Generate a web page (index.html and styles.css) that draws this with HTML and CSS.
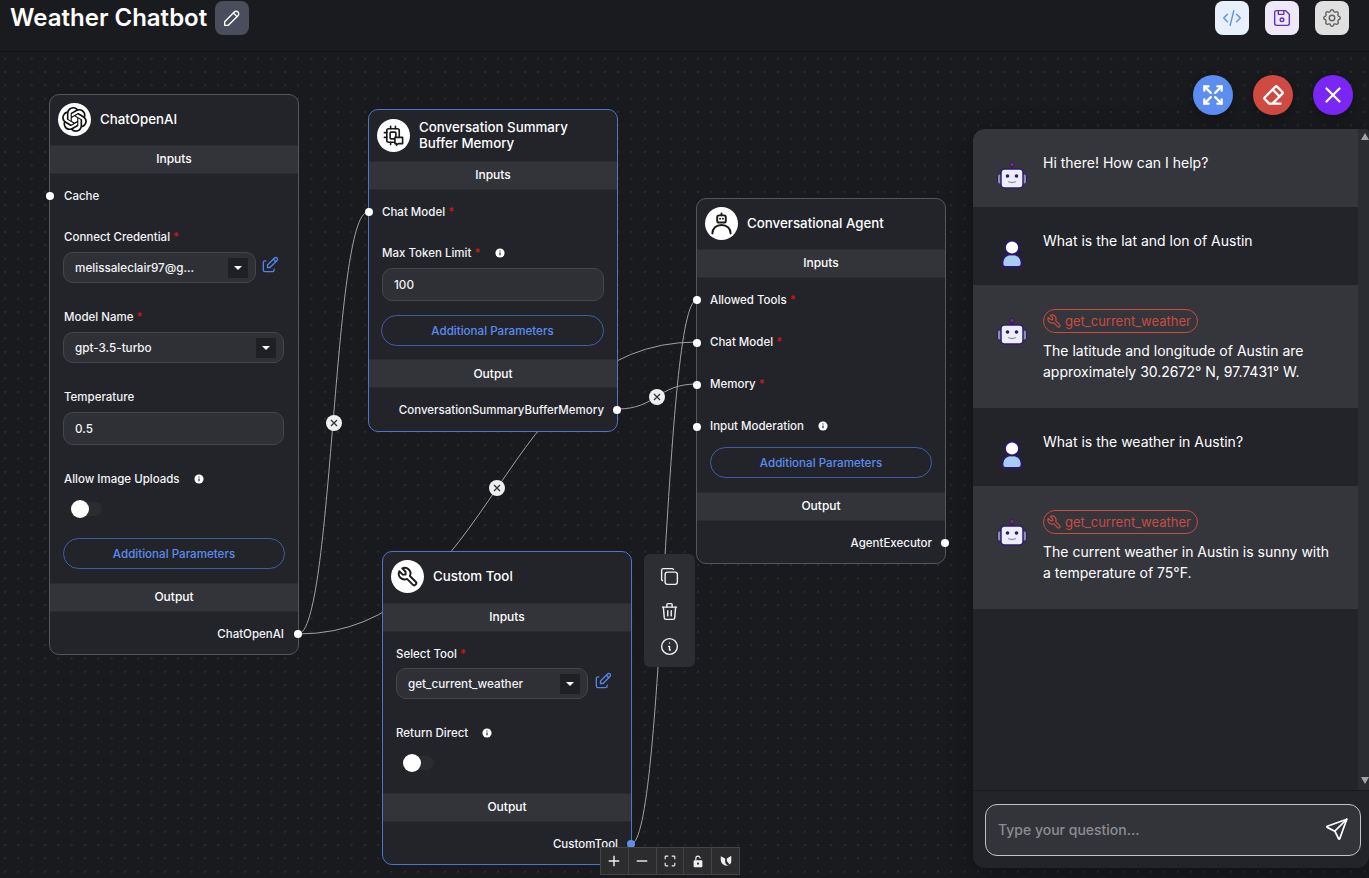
FILE: index.html
```html
<!DOCTYPE html>
<html lang="en">
<head>
<meta charset="utf-8">
<title>Weather Chatbot</title>
<link rel="stylesheet" href="styles.css">
</head>
<body>
<div class="app">
  <header class="topbar">
    <div class="title-group">
      <h1 class="title">Weather Chatbot</h1>
      <button class="square-btn btn-edit"><svg class="ico" viewBox="0 0 24 24"><path d="M4 20h4l10.5 -10.5a2.828 2.828 0 1 0 -4 -4l-10.5 10.5v4"/><path d="M13.5 6.5l4 4"/></svg></button>
    </div>
    <div class="top-actions">
      <button class="square-btn btn-code"><svg class="ico" viewBox="0 0 24 24"><path d="M7 8l-4 4l4 4"/><path d="M17 8l4 4l-4 4"/><path d="M14 4l-4 16"/></svg></button>
      <button class="square-btn btn-save"><svg class="ico" viewBox="0 0 24 24"><path d="M6 4h10l4 4v10a2 2 0 0 1 -2 2h-12a2 2 0 0 1 -2 -2v-12a2 2 0 0 1 2 -2"/><circle cx="12" cy="14" r="2"/><path d="M14 4v4h-6v-4"/></svg></button>
      <button class="square-btn btn-gear"><svg class="ico" viewBox="0 0 24 24"><path d="M10.325 4.317c.426 -1.756 2.924 -1.756 3.35 0a1.724 1.724 0 0 0 2.573 1.066c1.543 -.94 3.31 .826 2.37 2.37a1.724 1.724 0 0 0 1.065 2.572c1.756 .426 1.756 2.924 0 3.35a1.724 1.724 0 0 0 -1.066 2.573c.94 1.543 -.826 3.31 -2.37 2.37a1.724 1.724 0 0 0 -2.572 1.065c-.426 1.756 -2.924 1.756 -3.35 0a1.724 1.724 0 0 0 -2.573 -1.066c-1.543 .94 -3.31 -.826 -2.37 -2.37a1.724 1.724 0 0 0 -1.065 -2.572c-1.756 -.426 -1.756 -2.924 0 -3.35a1.724 1.724 0 0 0 1.066 -2.573c-.94 -1.543 .826 -3.31 2.37 -2.37c1 .608 2.296 .07 2.572 -1.065"/><circle cx="12" cy="12" r="3"/></svg></button>
    </div>
  </header>

  <main class="canvas">
    <svg class="edges" viewBox="0 52 1369 826">
      <path d="M298 634C333 634 333 212 368 212"/>
      <path d="M298 634C497 634 497 342 697 342"/>
      <path d="M617 409C657 409 657 384 697 384"/>
      <path d="M631 844C664 844 664 300 697 300"/>
      <g class="edge-x"><circle cx="334" cy="423" r="8"/><path d="M331 420l6 6M337 420l-6 6"/></g>
      <g class="edge-x"><circle cx="497" cy="488" r="8"/><path d="M494 485l6 6M500 485l-6 6"/></g>
      <g class="edge-x"><circle cx="657" cy="397" r="8"/><path d="M654 394l6 6M660 394l-6 6"/></g>
    </svg>

    <section class="node node-llm">
      <div class="node-head">
        <span class="node-icon"><svg class="logo-fill" viewBox="0 0 24 24"><path d="M22.2819 9.8211a5.9847 5.9847 0 0 0-.5157-4.9108 6.0462 6.0462 0 0 0-6.5098-2.9A6.0651 6.0651 0 0 0 4.9807 4.1818a5.9847 5.9847 0 0 0-3.9977 2.9 6.0462 6.0462 0 0 0 .7427 7.0966 5.98 5.98 0 0 0 .511 4.9107 6.051 6.051 0 0 0 6.5146 2.9001A5.9847 5.9847 0 0 0 13.2599 24a6.0557 6.0557 0 0 0 5.7718-4.2058 5.9894 5.9894 0 0 0 3.9977-2.9001 6.0557 6.0557 0 0 0-.7475-7.0729zm-9.022 12.6081a4.4755 4.4755 0 0 1-2.8764-1.0408l.1419-.0804 4.7783-2.7582a.7948.7948 0 0 0 .3927-.6813v-6.7369l2.02 1.1686a.071.071 0 0 1 .038.052v5.5826a4.504 4.504 0 0 1-4.4945 4.4944zm-9.6607-4.1254a4.4708 4.4708 0 0 1-.5346-3.0137l.142.0852 4.783 2.7582a.7712.7712 0 0 0 .7806 0l5.8428-3.3685v2.3324a.0804.0804 0 0 1-.0332.0615L9.74 19.9502a4.4992 4.4992 0 0 1-6.1408-1.6464zM2.3408 7.8956a4.485 4.485 0 0 1 2.3655-1.9728V11.6a.7664.7664 0 0 0 .3879.6765l5.8144 3.3543-2.0201 1.1685a.0757.0757 0 0 1-.071 0l-4.8303-2.7865A4.504 4.504 0 0 1 2.3408 7.872zm16.5963 3.8558L13.1038 8.364 15.1192 7.2a.0757.0757 0 0 1 .071 0l4.8303 2.7913a4.4944 4.4944 0 0 1-.6765 8.1042v-5.6772a.79.79 0 0 0-.407-.667zm2.0107-3.0231l-.142-.0852-4.7735-2.7818a.7759.7759 0 0 0-.7854 0L9.409 9.2297V6.8974a.0662.0662 0 0 1 .0284-.0615l4.8303-2.7866a4.4992 4.4992 0 0 1 6.6802 4.66zM8.3065 12.863l-2.02-1.1638a.0804.0804 0 0 1-.038-.0567V6.0742a4.4992 4.4992 0 0 1 7.3757-3.4537l-.142.0805L8.704 5.459a.7948.7948 0 0 0-.3927.6813zm1.0976-2.3654l2.602-1.4998 2.6069 1.4998v2.9994l-2.5974 1.4997-2.6067-1.4997Z"/></svg></span>
        <span class="node-title">ChatOpenAI</span>
      </div>
      <div class="bar">Inputs</div>
      <div class="row"><span class="handle handle-left"></span><span class="label">Cache</span></div>
      <div class="field">
        <div class="label">Connect Credential <span class="req">*</span></div>
        <div class="select-line">
          <div class="select select-short"><span>melissaleclair97@g...</span><span class="caret"></span></div>
          <svg class="ico edit-ico" viewBox="0 0 24 24"><path d="M7 7h-1a2 2 0 0 0 -2 2v9a2 2 0 0 0 2 2h9a2 2 0 0 0 2 -2v-1"/><path d="M20.385 6.585a2.1 2.1 0 0 0 -2.97 -2.97l-8.415 8.385v3h3l8.385 -8.415z"/><path d="M16 5l3 3"/></svg>
        </div>
      </div>
      <div class="field">
        <div class="label">Model Name <span class="req">*</span></div>
        <div class="select"><span>gpt-3.5-turbo</span><span class="caret"></span></div>
      </div>
      <div class="field">
        <div class="label">Temperature</div>
        <div class="input">0.5</div>
      </div>
      <div class="field field-toggle">
        <div class="label">Allow Image Uploads <svg class="info-dot" viewBox="0 0 12 12"><circle cx="6" cy="6" r="5.5"/><path d="M6 3v1.2M6 5.4v3.4"/></svg></div>
        <span class="toggle"></span>
      </div>
      <div class="btn-wrap"><div class="outline-btn">Additional Parameters</div></div>
      <div class="bar">Output</div>
      <div class="row row-out"><span class="label">ChatOpenAI</span><span class="handle handle-right"></span></div>
    </section>

    <section class="node node-memory selected">
      <div class="node-head">
        <span class="node-icon"><svg class="ico-dark" viewBox="0 0 24 24"><rect x="5" y="5" width="13" height="14" rx="2"/><rect x="8.500" y="8.500" width="6" height="7" rx="1"/><path d="M2.500 9H5M2.500 14H5M9 2.500V5M14 2.500V5M9 19v2.500"/><path class="bubble" d="M13.500 14h8v6.500h-4.500l-2 1.500v-1.500h-1.500z"/></svg></span>
        <span class="node-title">Conversation Summary Buffer Memory</span>
      </div>
      <div class="bar">Inputs</div>
      <div class="row"><span class="handle handle-left"></span><span class="label">Chat Model <span class="req">*</span></span></div>
      <div class="field">
        <div class="label">Max Token Limit <span class="req">*</span> <svg class="info-dot" viewBox="0 0 12 12"><circle cx="6" cy="6" r="5.5"/><path d="M6 3v1.2M6 5.4v3.4"/></svg></div>
        <div class="input">100</div>
      </div>
      <div class="btn-wrap"><div class="outline-btn">Additional Parameters</div></div>
      <div class="bar">Output</div>
      <div class="row row-out"><span class="label">ConversationSummaryBufferMemory</span><span class="handle handle-right"></span></div>
    </section>

    <section class="node node-agent">
      <div class="node-head">
        <span class="node-icon"><svg class="ico-dark ico-agent" viewBox="0 0 24 24"><rect x="7.500" y="3.500" width="9" height="7.500" rx="2"/><path d="M12 3.500V1.500M10.500 7h.01M13.500 7h.01M2.500 22.500c0-5.500 4-9 9.500-9s9.500 3.500 9.500 9"/></svg></span>
        <span class="node-title">Conversational Agent</span>
      </div>
      <div class="bar">Inputs</div>
      <div class="row"><span class="handle handle-left"></span><span class="label">Allowed Tools <span class="req">*</span></span></div>
      <div class="row"><span class="handle handle-left"></span><span class="label">Chat Model <span class="req">*</span></span></div>
      <div class="row"><span class="handle handle-left"></span><span class="label">Memory <span class="req">*</span></span></div>
      <div class="row"><span class="handle handle-left"></span><span class="label">Input Moderation <svg class="info-dot" viewBox="0 0 12 12"><circle cx="6" cy="6" r="5.5"/><path d="M6 3v1.2M6 5.4v3.4"/></svg></span></div>
      <div class="btn-wrap"><div class="outline-btn">Additional Parameters</div></div>
      <div class="bar">Output</div>
      <div class="row row-out"><span class="label">AgentExecutor</span><span class="handle handle-right"></span></div>
    </section>

    <section class="node node-tool selected">
      <div class="node-head">
        <span class="node-icon"><svg class="ico-dark ico-heavy" viewBox="0 0 24 24"><path d="M7 10h3v-3l-3.500 -3.500a6 6 0 0 1 8 8l6 6a2 2 0 0 1 -3 3l-6 -6a6 6 0 0 1 -8 -8l3.500 3.500"/></svg></span>
        <span class="node-title">Custom Tool</span>
      </div>
      <div class="bar">Inputs</div>
      <div class="field field-tool">
        <div class="label">Select Tool <span class="req">*</span></div>
        <div class="select-line">
          <div class="select select-short"><span>get_current_weather</span><span class="caret"></span></div>
          <svg class="ico edit-ico" viewBox="0 0 24 24"><path d="M7 7h-1a2 2 0 0 0 -2 2v9a2 2 0 0 0 2 2h9a2 2 0 0 0 2 -2v-1"/><path d="M20.385 6.585a2.1 2.1 0 0 0 -2.97 -2.97l-8.415 8.385v3h3l8.385 -8.415z"/><path d="M16 5l3 3"/></svg>
        </div>
      </div>
      <div class="field field-toggle">
        <div class="label">Return Direct <svg class="info-dot" viewBox="0 0 12 12"><circle cx="6" cy="6" r="5.500"/><path d="M6 3v1.200M6 5.400v3.400"/></svg></div>
        <span class="toggle"></span>
      </div>
      <div class="bar">Output</div>
      <div class="row row-out"><span class="label">CustomTool</span><span class="handle handle-right handle-blue"></span></div>
    </section>

    <aside class="node-toolbar">
      <svg class="ico" viewBox="0 0 24 24"><path d="M7 9.667a2.667 2.667 0 0 1 2.667 -2.667h8.666a2.667 2.667 0 0 1 2.667 2.667v8.666a2.667 2.667 0 0 1 -2.667 2.667h-8.666a2.667 2.667 0 0 1 -2.667 -2.667z"/><path d="M4.012 16.737a2.005 2.005 0 0 1 -1.012 -1.737v-10c0 -1.100 .9 -2 2 -2h10c.75 0 1.158 .385 1.500 1"/></svg>
      <svg class="ico" viewBox="0 0 24 24"><path d="M4 7h16"/><path d="M10 11v6"/><path d="M14 11v6"/><path d="M5 7l1 12a2 2 0 0 0 2 2h8a2 2 0 0 0 2 -2l1 -12"/><path d="M9 7v-3a1 1 0 0 1 1 -1h4a1 1 0 0 1 1 1v3"/></svg>
      <svg class="ico" viewBox="0 0 24 24"><circle cx="12" cy="12" r="9"/><path d="M12 8h.01"/><path d="M11 12h1v4h1"/></svg>
    </aside>

    <nav class="flow-controls">
      <span class="ctl"><svg class="ctl-ico" viewBox="0 0 16 16"><path d="M8 2v12M2 8h12"/></svg></span>
      <span class="ctl"><svg class="ctl-ico" viewBox="0 0 16 16"><path d="M2 8h12"/></svg></span>
      <span class="ctl"><svg class="ctl-ico ctl-thin" viewBox="0 0 16 16"><path d="M2.500 6V3.500a1 1 0 0 1 1-1H6M10 2.500h2.500a1 1 0 0 1 1 1V6M13.500 10v2.500a1 1 0 0 1-1 1H10M6 13.500H3.500a1 1 0 0 1-1-1V10"/></svg></span>
      <span class="ctl"><svg class="ctl-ico ctl-thin" viewBox="0 0 16 16"><rect class="ctl-solid" x="3" y="7" width="10" height="8" rx="1"/><path d="M5.500 7V5a2.500 2.500 0 0 1 5 0"/><circle class="ctl-hole" cx="8" cy="11" r="1.200"/></svg></span>
      <span class="ctl"><svg class="ctl-ico" viewBox="0 0 16 16"><path class="ctl-solid" d="M2 2.500l5 2.500v3.500a5 5 0 0 0 5 5h-3a7 7 0 0 1-7-7z"/><path class="ctl-solid" d="M9 5l5-3v6.500a4 4 0 0 1-2 3.500L9 8z"/></svg></span>
    </nav>

    <div class="fabs">
      <button class="fab fab-blue"><svg class="ico" viewBox="0 0 24 24"><path d="M16 4h4v4"/><path d="M14 10l6 -6"/><path d="M8 20h-4v-4"/><path d="M4 20l6 -6"/><path d="M16 20h4v-4"/><path d="M14 14l6 6"/><path d="M8 4h-4v4"/><path d="M4 4l6 6"/></svg></button>
      <button class="fab fab-red"><svg class="ico" viewBox="0 0 24 24"><path d="M19 20h-10.500l-4.210 -4.300a1 1 0 0 1 0 -1.410l10 -10a1 1 0 0 1 1.410 0l5 5a1 1 0 0 1 0 1.410l-9.200 9.300"/><path d="M18 13.300l-6.300 -6.300"/></svg></button>
      <button class="fab fab-purple"><svg class="ico" viewBox="0 0 24 24"><path d="M18 6l-12 12"/><path d="M6 6l12 12"/></svg></button>
    </div>

    <aside class="chat">
      <div class="chat-scroll">
        <div class="messages">
          <div class="msg msg-bot">
            <svg class="avatar" viewBox="0 0 32 32"><use href="#bot"/></svg>
            <div class="msg-body"><p class="msg-text">Hi there! How can I help?</p></div>
          </div>
          <div class="msg">
            <svg class="avatar avatar-user" viewBox="0 0 32 32"><use href="#user"/></svg>
            <div class="msg-body"><p class="msg-text">What is the lat and lon of Austin</p></div>
          </div>
          <div class="msg msg-bot">
            <svg class="avatar avatar-low" viewBox="0 0 32 32"><use href="#bot"/></svg>
            <div class="msg-body">
              <span class="chip"><svg class="chip-ico" viewBox="0 0 24 24"><path d="M7 10h3v-3l-3.500 -3.500a6 6 0 0 1 8 8l6 6a2 2 0 0 1 -3 3l-6 -6a6 6 0 0 1 -8 -8l3.500 3.500"/></svg>get_current_weather</span>
              <p class="msg-text">The latitude and longitude of Austin are approximately 30.2672° N, 97.7431° W.</p>
            </div>
          </div>
          <div class="msg">
            <svg class="avatar avatar-user" viewBox="0 0 32 32"><use href="#user"/></svg>
            <div class="msg-body"><p class="msg-text">What is the weather in Austin?</p></div>
          </div>
          <div class="msg msg-bot">
            <svg class="avatar avatar-low" viewBox="0 0 32 32"><use href="#bot"/></svg>
            <div class="msg-body">
              <span class="chip"><svg class="chip-ico" viewBox="0 0 24 24"><path d="M7 10h3v-3l-3.500 -3.500a6 6 0 0 1 8 8l6 6a2 2 0 0 1 -3 3l-6 -6a6 6 0 0 1 -8 -8l3.500 3.500"/></svg>get_current_weather</span>
              <p class="msg-text">The current weather in Austin is sunny with a temperature of 75°F.</p>
            </div>
          </div>
        </div>
        <div class="scrollbar"><span class="arrow-up"></span><span class="arrow-down"></span></div>
      </div>
      <div class="composer">
        <div class="composer-box">
          <span class="placeholder">Type your question...</span>
          <svg class="ico send-ico" viewBox="0 0 24 24"><path d="M10 14l11 -11"/><path d="M21 3l-6.500 18a.55 .55 0 0 1 -1 0l-3.500 -7l-7 -3.500a.55 .55 0 0 1 0 -1l18 -6.500"/></svg>
        </div>
      </div>
    </aside>
  </main>
</div>

<svg class="defs" width="0" height="0">
  <defs>
    <g id="bot">
      <path d="M16 8V4.500" stroke="#2f1a66" stroke-width="1.500"/>
      <circle cx="16" cy="3.500" r="2" fill="#8a2f6a" stroke="#2f1a66"/>
      <rect x="1.500" y="13" width="5" height="10" rx="2" fill="#8d8fb0" stroke="#2f1a66"/>
      <rect x="25.500" y="13" width="5" height="10" rx="2" fill="#8d8fb0" stroke="#2f1a66"/>
      <rect x="5" y="8" width="22" height="19" rx="3.500" fill="#ecedfa" stroke="#2f1a66" stroke-width="1.500"/>
      <circle cx="11.500" cy="15" r="1.800" fill="#2f1a66"/>
      <circle cx="20.500" cy="15" r="1.800" fill="#2f1a66"/>
      <path d="M12 20.500q4 2 8 0" fill="none" stroke="#8d8fb0" stroke-width="1.300"/>
    </g>
    <g id="user">
      <path d="M6.500 26v-2a9.500 8 0 0 1 19 0v2a3 3 0 0 1-3 3h-13a3 3 0 0 1-3-3z" fill="#a7cdf2" stroke="#2c1670" stroke-width="1.800"/>
      <circle cx="16" cy="9.500" r="7" fill="#fff" stroke="#2c1670" stroke-width="1.800"/>
    </g>
  </defs>
</svg>
</body>
</html>
```

FILE: styles.css
```css
* { box-sizing: border-box; }
html, body { margin: 0; padding: 0; height: 100%; overflow: hidden; }
body { background: #191a1e; color: #fff; font-family: Inter, "Liberation Sans", sans-serif; }
button { border: 0; padding: 0; cursor: pointer; }
p, h1 { margin: 0; }
.defs { position: absolute; }

.app { display: flex; flex-direction: column; height: 878px; }

.topbar { flex: 0 0 52px; display: flex; justify-content: space-between; align-items: flex-start; padding: 1px 20px 0 10px; background: #1a1b1f; border-bottom: 1px solid #101114; }
.title-group { display: flex; align-items: center; gap: 8px; }
.title { font-size: 24px; font-weight: 600; line-height: 34px; letter-spacing: 0; }
.top-actions { display: flex; gap: 16px; }
.square-btn { width: 34px; height: 34px; border-radius: 8px; display: flex; align-items: center; justify-content: center; }
.ico { width: 20px; height: 20px; fill: none; stroke: currentColor; stroke-width: 1.6; stroke-linecap: round; stroke-linejoin: round; }
.square-btn .ico { width: 22px; height: 22px; stroke-width: 1.5; }
.btn-edit { background: #4a4e5c; color: #fff; }
.btn-code { background: #e8f0fd; color: #5c8ef0; }
.btn-save { background: #efe8f8; color: #5e35b1; }
.btn-gear { background: #e0e0e0; color: #616161; }

.canvas { position: relative; flex: 1; background-color: #191a1e; background-image: radial-gradient(circle at center, #55565b 0.5px, transparent 0.75px); background-size: 13.33px 13.33px; background-position: -1.67px 0; }
.edges { position: absolute; inset: 0; width: 1369px; height: 826px; fill: none; stroke: #a0a0a6; stroke-width: 1; }
.edge-x circle { fill: #efefef; stroke: none; }
.edge-x path { stroke: #333; stroke-width: 1.3; }

.node { --pad: 13px; position: absolute; width: 250px; display: flex; flex-direction: column; background: #23242a; border: 1px solid #55565b; border-radius: 10px; }
.node.selected { border-color: #4f74c9; }
.node-llm { --pad: 14px; left: 49px; top: 42px; }
.node-memory { left: 368px; top: 57px; }
.node-agent { left: 696px; top: 146px; }
.node-tool { left: 382px; top: 499px; }

.node-head { height: 50px; display: flex; align-items: center; gap: 9px; padding: 0 8px 1px; }
.node-memory .node-head { height: 51px; }
.node-tool .node-head { height: 51px; padding-bottom: 2px; }
.node-icon { flex: none; width: 33px; height: 33px; border-radius: 50%; background: #fff; display: flex; align-items: center; justify-content: center; }
.logo-fill { width: 25px; height: 25px; fill: #111; }
.ico-dark { width: 23px; height: 23px; fill: none; stroke: #1a1a1a; stroke-width: 1.7; stroke-linecap: round; stroke-linejoin: round; }
.ico-heavy { stroke-width: 2; }
.ico-agent { stroke-width: 2; }
.bubble { fill: #fff; }
.node-title { font-size: 13.3px; line-height: 16.5px; font-weight: 500; }

.bar { height: 29px; padding-bottom: 2px; background: #33343a; border-top: 1px solid #2b2c31; border-bottom: 1px solid #2b2c31; display: flex; align-items: center; justify-content: center; font-size: 12px; font-weight: 500; }
.node-memory .btn-wrap + .bar { padding-bottom: 0; }

.row { position: relative; height: 42px; display: flex; align-items: center; padding: 0 var(--pad); }
.bar + .row { height: 43px; padding-top: 1px; }
.bar + .row.row-out { height: 42px; justify-content: flex-end; }
.node-memory .bar + .row.row-out { height: 43px; }
.label { font-size: 11.5px; font-weight: 500; line-height: 16px; color: #f4f4f6; white-space: nowrap; }
.req { color: #d01818; }
.handle { position: absolute; width: 8px; height: 8px; border-radius: 50%; background: #fff; top: calc(50% - 3.5px); }
.handle-left { left: -4px; }
.handle-right { right: -4px; }
.handle-blue { background: #5f8fe8; }

.field { padding: 12px var(--pad) 14px; display: flex; flex-direction: column; gap: 7px; }
.field-tool { padding-top: 14px; gap: 6px; }
.select-line { display: flex; align-items: center; gap: 4px; }
.field-tool .select-line { gap: 5px; }
.select { height: 31px; padding: 0 7px 0 11px; display: flex; align-items: center; justify-content: space-between; background: #2f3036; border: 1px solid #45464c; border-radius: 10px; font-size: 11.7px; font-weight: 500; color: #f4f4f6; white-space: nowrap; }
.select-short { width: 193px; flex: none; }
.node-tool .select-short { width: 192px; }
.node-llm .select, .node-llm .input { margin-left: -1px; }
.caret { width: 20px; height: 20px; background: #1f2024; position: relative; flex: none; }
.caret::after { content: ""; position: absolute; left: 6px; top: 8px; border-left: 4px solid transparent; border-right: 4px solid transparent; border-top: 4px solid #fff; }
.edit-ico { color: #5384e8; margin-bottom: 6px; }
.input { height: 33px; padding: 0 11px; display: flex; align-items: center; background: #2f3036; border: 1px solid #45464c; border-radius: 10px; font-size: 11.7px; font-weight: 500; color: #f4f4f6; }
.info-dot { width: 10px; height: 10px; margin-left: 11px; fill: #fff; vertical-align: -1px; stroke-width: 0; }
.info-dot path { fill: none; stroke: #23242a; stroke-width: 1.4; }

.field-toggle { height: 79px; gap: 13px; }
.node-tool .field-toggle { height: 80px; }
.toggle { position: relative; width: 30px; height: 14px; margin: 2px 0 0 8px; border-radius: 7px; background: #2b2c31; display: block; flex: none; }
.toggle::before { content: ""; position: absolute; left: -1px; top: -2px; width: 18px; height: 18px; border-radius: 50%; background: #fff; }

.btn-wrap { padding: 0 13px 14px; }
.node-memory .btn-wrap { padding: 0 13px 13px 12px; }
.outline-btn { height: 31px; border: 1px solid #3f5da8; border-radius: 16px; display: flex; align-items: center; justify-content: center; font-size: 11.6px; font-weight: 500; color: #5a8cf2; }

.node-toolbar { position: absolute; left: 644px; top: 502px; width: 51px; height: 113px; background: #2d2e33; border-radius: 6px; display: flex; flex-direction: column; align-items: center; gap: 14px; padding-top: 11.5px; color: #f0f0f0; }
.node-toolbar .ico { width: 21px; height: 21px; flex: none; }

.flow-controls { position: absolute; left: 600px; top: 795px; width: 140px; display: flex; border: 1px solid #444; background: #2c2c2e; }
.ctl { flex: 1; height: 26px; display: flex; align-items: center; justify-content: center; border-right: 1px solid #444; }
.ctl:last-child { border-right: 0; }
.ctl-ico { width: 14px; height: 14px; fill: none; stroke: #efefef; stroke-width: 1.6; }
.ctl-thin { stroke-width: 1.3; }
.ctl-solid { fill: #efefef; stroke: none; }
.ctl-hole { fill: #2c2c2e; stroke: none; }

.fabs { position: absolute; left: 1193px; top: 23px; display: flex; gap: 20px; }
.fab { width: 40px; height: 40px; border-radius: 50%; display: flex; align-items: center; justify-content: center; color: #fff; box-shadow: 0 3px 10px rgba(0,0,0,.3); }
.fab .ico { width: 26px; height: 26px; stroke-width: 2.1; }
.fab-blue { background: #5c8df0; }
.fab-red { background: #cf4a40; }
.fab-purple { background: #7a26f5; }

.chat { position: absolute; left: 973px; top: 77px; width: 396px; height: 739px; display: flex; flex-direction: column; background: #23242a; border-radius: 12px 4px 12px 12px; box-shadow: 0 6px 24px rgba(0,0,0,.35); overflow: hidden; }
.chat-scroll { height: 662px; display: flex; border-bottom: 1px solid #191a1e; }
.messages { flex: 1; min-width: 0; }
.msg { display: flex; gap: 15px; min-height: 78px; padding: 25px 25px 0 23px; }
.msg-bot { background: #35363c; }
.msg-bot:has(.chip) { height: 123px; padding-top: 24px; }
.avatar { flex: none; width: 32px; height: 32px; margin-top: 7px; }
.avatar-user { margin-top: 6px; }
.avatar-low { margin-top: 8px; }
.msg-body { flex: 1; min-width: 0; }
.msg-text { font-size: 14px; line-height: 21px; font-weight: 400; color: #fff; margin-top: -2px; }
.chip { display: inline-flex; align-items: center; gap: 3px; height: 24px; padding: 0 6px 0 2px; margin-bottom: 9px; border: 1px solid #cc4a40; border-radius: 12px; font-size: 13px; color: #cc4a40; }
.chip-ico { width: 16px; height: 16px; fill: none; stroke: #cc4a40; stroke-width: 1.800; stroke-linecap: round; stroke-linejoin: round; }

.scrollbar { flex: 0 0 11px; display: flex; flex-direction: column; justify-content: space-between; align-items: flex-end; padding: 4px 0 6px; background: #2b2c31; }
.arrow-up { border-left: 4px solid transparent; border-right: 4px solid transparent; border-bottom: 7px solid #a3a3a3; }
.arrow-down { border-left: 4px solid transparent; border-right: 4px solid transparent; border-top: 7px solid #a3a3a3; }

.composer { flex: 1; padding: 13px 8px 12px 12px; }
.composer-box { height: 52px; display: flex; align-items: center; justify-content: space-between; padding: 0 10px 2px 12px; background: #33343a; border: 1px solid #c3c3c6; border-radius: 12px; }
.placeholder { font-size: 14px; font-weight: 500; color: #8b8c92; }
.send-ico { width: 26px; height: 26px; color: #fff; }
```
